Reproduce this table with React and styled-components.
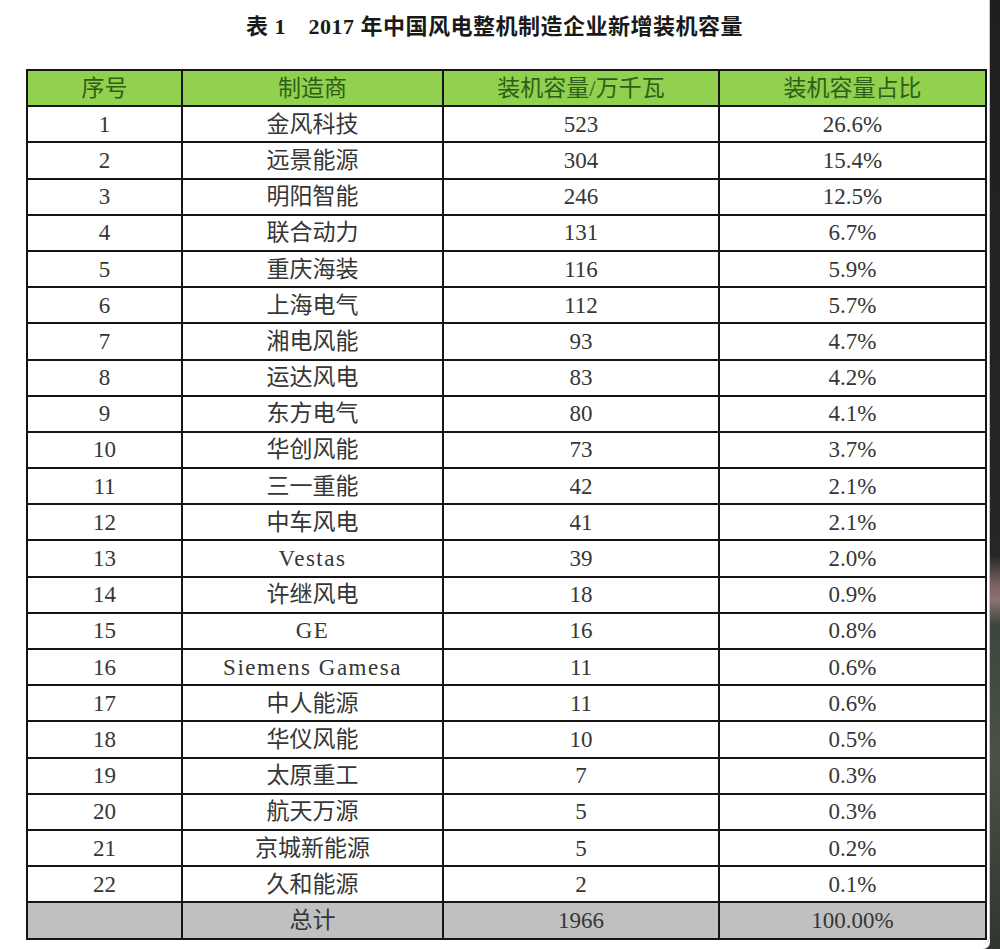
import React from "react";
import styled, { createGlobalStyle } from "styled-components";

const rows = [
  ["1", "金风科技", "523", "26.6%"],
  ["2", "远景能源", "304", "15.4%"],
  ["3", "明阳智能", "246", "12.5%"],
  ["4", "联合动力", "131", "6.7%"],
  ["5", "重庆海装", "116", "5.9%"],
  ["6", "上海电气", "112", "5.7%"],
  ["7", "湘电风能", "93", "4.7%"],
  ["8", "运达风电", "83", "4.2%"],
  ["9", "东方电气", "80", "4.1%"],
  ["10", "华创风能", "73", "3.7%"],
  ["11", "三一重能", "42", "2.1%"],
  ["12", "中车风电", "41", "2.1%"],
  ["13", "Vestas", "39", "2.0%"],
  ["14", "许继风电", "18", "0.9%"],
  ["15", "GE", "16", "0.8%"],
  ["16", "Siemens Gamesa", "11", "0.6%"],
  ["17", "中人能源", "11", "0.6%"],
  ["18", "华仪风能", "10", "0.5%"],
  ["19", "太原重工", "7", "0.3%"],
  ["20", "航天万源", "5", "0.3%"],
  ["21", "京城新能源", "5", "0.2%"],
  ["22", "久和能源", "2", "0.1%"],
];

const columns = [
  { label: "序号", width: 155 },
  { label: "制造商", width: 261 },
  { label: "装机容量/万千瓦", width: 276 },
  { label: "装机容量占比", width: 267 },
];

const isLatin = (text) => /^[A-Za-z ]+$/.test(text);

const GlobalStyle = createGlobalStyle`
  html, body {
    margin: 0;
    padding: 0;
    background: #ffffff;
  }
  body {
    font-family: "Liberation Serif", "Noto Sans CJK SC", serif;
  }
`;

const Page = styled.div`
  display: flex;
  width: 1000px;
  height: 949px;
  overflow: hidden;
  background: linear-gradient(
    to bottom,
    #1f1f1f 0px,
    #262626 555px,
    #7a6262 585px,
    #8a7372 600px,
    #3d463c 625px,
    #4a5247 760px,
    #2f362e 949px
  );
`;

const Sheet = styled.div`
  width: 989px;
  height: 944px;
  background: #ffffff;
  border-right: 1px solid #c8c8c8;
  border-bottom-right-radius: 7px;
  box-shadow: 0 5px 0 0 #ffffff;
`;

const Title = styled.h1`
  margin: 0;
  height: 54px;
  line-height: 54px;
  text-align: center;
  font-size: 22px;
  letter-spacing: 0.5px;
  font-weight: 700;
  color: #1a1a1a;
  font-family: "Liberation Serif", "Noto Sans CJK SC", serif;
`;

const Table = styled.table`
  margin: 15px 0 0 26px;
  width: 959px;
  border-collapse: collapse;
  table-layout: fixed;
  font-family: "Liberation Serif", "Noto Sans CJK SC", serif;
  font-size: 23px;
  line-height: 1;
`;

const HeadRow = styled.tr`
  background: #92d050;
`;

const HeadCell = styled.th`
  height: 34.2px;
  padding: 0;
  border: 2px solid #151515;
  font-weight: 400;
  color: #2e5f17;
  text-align: center;
  vertical-align: middle;
`;

const Row = styled.tr`
  background: ${({ $total }) => ($total ? "#c0c0c0" : "#ffffff")};
`;

const Cell = styled.td`
  height: 34.2px;
  padding: 0;
  border: 2px solid #151515;
  color: #363636;
  text-align: center;
  vertical-align: middle;
  letter-spacing: ${({ $latin }) => ($latin ? "1.5px" : "0")};
`;

const App = () => {
  return (
    <>
      <GlobalStyle />
      <Page>
        <Sheet>
          <Title>表 1　2017 年中国风电整机制造企业新增装机容量</Title>
          <Table>
            <colgroup>
              {columns.map((col) => (
                <col key={col.label} style={{ width: col.width }} />
              ))}
            </colgroup>
            <thead>
              <HeadRow>
                {columns.map((col) => (
                  <HeadCell key={col.label}>{col.label}</HeadCell>
                ))}
              </HeadRow>
            </thead>
            <tbody>
              {rows.map((row) => (
                <Row key={row[0]}>
                  {row.map((value, i) => (
                    <Cell key={i} $latin={isLatin(value)}>
                      {value}
                    </Cell>
                  ))}
                </Row>
              ))}
              <Row $total>
                <Cell />
                <Cell>总计</Cell>
                <Cell>1966</Cell>
                <Cell>100.00%</Cell>
              </Row>
            </tbody>
          </Table>
        </Sheet>
      </Page>
    </>
  );
};

export default App;
